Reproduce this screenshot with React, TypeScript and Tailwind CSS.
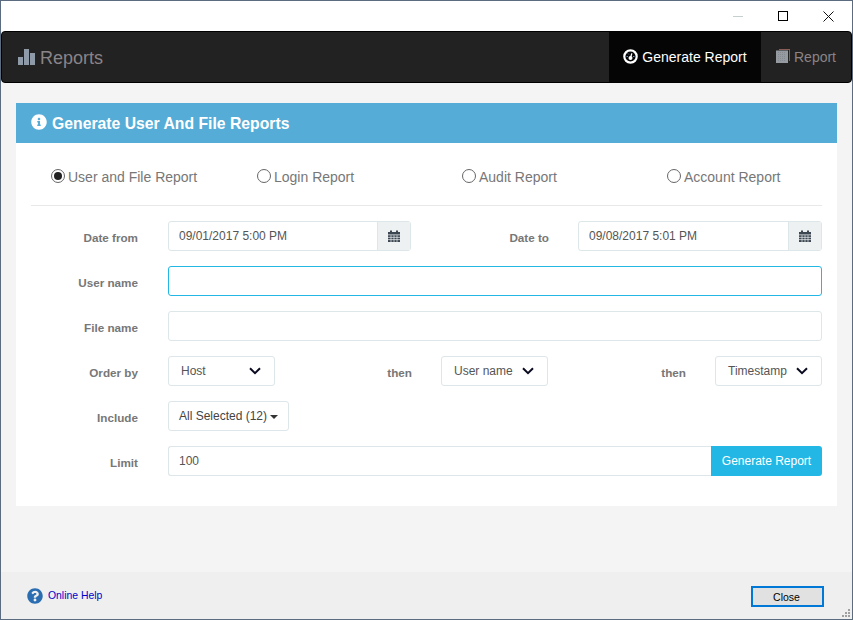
import { FaInfoCircle, FaQuestionCircle } from "react-icons/fa";

const CalendarIcon = () => (
  <svg width="12" height="12" viewBox="0 0 12 12" className="text-[#3c4650]">
    <path fill="currentColor" d="M0 2h2V0.5h2V2h4V0.5h2V2h2v2.5H0zM0 5.2h12V12H0z" />
    <path stroke="#e9eef0" strokeWidth="0.7" d="M0 7.4h12M0 9.6h12M3 5.2V12M6 5.2V12M9 5.2V12" />
  </svg>
);

const Chevron = () => (
  <svg width="12" height="8" viewBox="0 0 12 8" fill="none" className="shrink-0">
    <path d="M1 1.2l5 5 5-5" stroke="#0a0a20" strokeWidth="2" />
  </svg>
);

const Label = ({ children, className = "w-[107px]" }: { children: string; className?: string }) => (
  <label className={`${className} shrink-0 pt-[8px] text-right text-[11.7px] font-bold text-[#777]`}>
    {children}
  </label>
);

const Radio = ({ label, checked = false }: { label: string; checked?: boolean }) => (
  <div className="flex items-center gap-[3px]">
    <span className="flex size-[14px] items-center justify-center rounded-full border border-[#666] bg-white">
      {checked && <span className="size-2 rounded-full bg-[#222]" />}
    </span>
    <span className="pt-[3px] text-sm text-[#777]">{label}</span>
  </div>
);

const DateInput = ({ value, className }: { value: string; className: string }) => (
  <div className={`${className} flex h-[30px] rounded-[3px] border border-[#dde6e9] bg-white text-xs text-[#555]`}>
    <div className="flex flex-1 items-center pl-[10px]">{value}</div>
    <div className="flex w-[33px] items-center justify-center border-l border-[#dde6e9] bg-[#edf1f2]">
      <CalendarIcon />
    </div>
  </div>
);

const Select = ({ value }: { value: string }) => (
  <div className="flex h-[30px] w-[107px] shrink-0 items-center justify-between rounded-[3px] border border-[#dde6e9] bg-white pl-3 pr-[13px] text-xs text-[#555]">
    <span>{value}</span>
    <Chevron />
  </div>
);

export default function App() {
  return (
    <div className="flex h-[620px] w-[853px] flex-col border border-[#5b6b80] bg-[#f4f4f4] font-['Liberation_Sans',Arial,sans-serif]">
      <div className="flex h-[30px] shrink-0 items-center justify-end bg-white">
        <span className="mr-[35px] h-px w-[10px] bg-[#c5cfcf]" />
        <span className="mr-[35px] size-[10px] border border-black" />
        <svg width="11" height="11" viewBox="0 0 11 11" className="mr-[18px]">
          <path d="M.5.5l10 10M10.5.5l-10 10" stroke="#111" />
        </svg>
      </div>

      <nav className="flex h-[52px] shrink-0 items-stretch justify-between overflow-hidden rounded-[4px] border border-black bg-[#222]">
        <div className="flex items-center pl-[16px] pt-[2px] text-lg text-[#8a8488]">
          <svg width="18" height="16" viewBox="0 0 18 16" className="mr-[4px] -mt-[2px]">
            <path fill="#8f9aa8" d="M0 8h5v8H0zM6 0h5v16H6zM12 4h5v12h-5z" />
          </svg>
          Reports
        </div>
        <div className="flex">
          <div className="flex w-[152px] items-center justify-center gap-[4px] bg-[#050505] text-sm text-white">
            <svg width="15" height="15" viewBox="0 0 15 15" className="-mt-[2px]">
              <circle cx="7.5" cy="7.5" r="6.2" fill="#050505" stroke="#fff" strokeWidth="2.2" />
              <path d="M3.6 9.6A4 4 0 0 1 11.4 9.6z" fill="#050505" />
              <circle cx="7.5" cy="9" r="2" fill="#fff" />
              <path d="M7.5 9l1.3-4.6" stroke="#fff" strokeWidth="1.3" />
              <path d="M3.6 7.5h1.2M10.2 7.5h1.2M5 4.6l.7.7" stroke="#7fb4ff" />
            </svg>
            Generate Report
          </div>
          <div className="flex w-[90px] items-center justify-center gap-[4px] text-sm text-[#8a8488]">
            <svg width="14" height="14" viewBox="0 0 14 14" className="-mt-[2px]">
              <path fill="#8b5c58" d="M3 0h11v12h-1V1H3z" />
              <path fill="#969ba2" d="M0 1.5h12V14H0z" />
              <path stroke="#7b7f86" strokeWidth="0.6" strokeDasharray="1 1" d="M2 3.5h8M2 5.5h8M2 7.5h8M2 9.5h8M2 11.5h8" />
            </svg>
            Report
          </div>
        </div>
      </nav>

      <main className="flex-1 px-[15px] pt-[20px]">
        <section className="bg-white">
          <header className="flex h-[40px] items-center gap-[5px] bg-[#55acd6] pl-[15px] text-[15.75px] font-bold text-white">
            <FaInfoCircle className="-mt-[2px] size-4" />
            <span className="pt-px">Generate User And File Reports</span>
          </header>
          <div className="px-[15px] pb-[30px]">
            <div className="grid h-[63px] grid-cols-[206px_205px_205px_1fr] items-center border-b border-[#e8e8e8] pl-[20px] pt-[3px]">
              <Radio label="User and File Report" checked />
              <Radio label="Login Report" />
              <Radio label="Audit Report" />
              <Radio label="Account Report" />
            </div>
            <div className="flex flex-col gap-[15px] pt-[15px]">
              <div className="flex gap-[30px]">
                <Label>Date from</Label>
                <DateInput value="09/01/2017 5:00 PM" className="w-[243px]" />
                <Label className="w-[108px]">Date to</Label>
                <DateInput value="09/08/2017 5:01 PM" className="-ml-[1px] w-[244px]" />
              </div>
              <div className="flex gap-[30px]">
                <Label>User name</Label>
                <div className="h-[30px] flex-1 rounded-[3px] border border-[#23b7e5] bg-white" />
              </div>
              <div className="flex gap-[30px]">
                <Label>File name</Label>
                <div className="h-[30px] flex-1 rounded-[3px] border border-[#dde6e9] bg-white" />
              </div>
              <div className="flex">
                <Label className="mr-[30px] w-[107px]">Order by</Label>
                <Select value="Host" />
                <Label className="mr-[29px] w-[137px]">then</Label>
                <Select value="User name" />
                <Label className="mr-[29px] w-[138px]">then</Label>
                <Select value="Timestamp" />
              </div>
              <div className="flex gap-[30px]">
                <Label>Include</Label>
                <div className="flex h-[30px] w-[121px] items-center justify-center gap-[3px] rounded-[3px] border border-[#dde6e9] bg-white text-xs text-[#444]">
                  All Selected (12)
                  <span className="mt-[2px] size-0 border-x-[4px] border-t-[4px] border-x-transparent border-t-[#333]" />
                </div>
              </div>
              <div className="flex gap-[30px]">
                <Label>Limit</Label>
                <div className="flex h-[30px] flex-1">
                  <div className="flex flex-1 items-center rounded-l-[3px] border border-r-0 border-[#dde6e9] bg-white pl-[10px] text-xs text-[#555]">
                    100
                  </div>
                  <button className="w-[111px] rounded-r-[3px] bg-[#23b7e5] text-xs text-white">
                    Generate Report
                  </button>
                </div>
              </div>
            </div>
          </div>
        </section>
      </main>

      <footer className="relative flex h-[47px] shrink-0 items-center justify-between bg-[#efefef] pl-[26px] pr-[28px]">
        <a className="flex items-center gap-[5px] text-[10.4px] text-[#0000cc]">
          <FaQuestionCircle className="size-4 text-[#2a6db0]" />
          Online Help
        </a>
        <button className="mt-[1px] h-[21px] w-[73px] border-2 border-[#0078d7] bg-[#e1e1e1] pr-[2px] pt-[2px] text-[10.5px] text-black">
          Close
        </button>
        <svg width="11" height="11" viewBox="0 0 11 11" className="absolute bottom-0 right-0">
          <path fill="#a0a0a0" d="M7 1h2v2H7zM4 4h2v2H4zM7 4h2v2H7zM1 7h2v2H1zM4 7h2v2H4zM7 7h2v2H7z" />
        </svg>
      </footer>
    </div>
  );
}
